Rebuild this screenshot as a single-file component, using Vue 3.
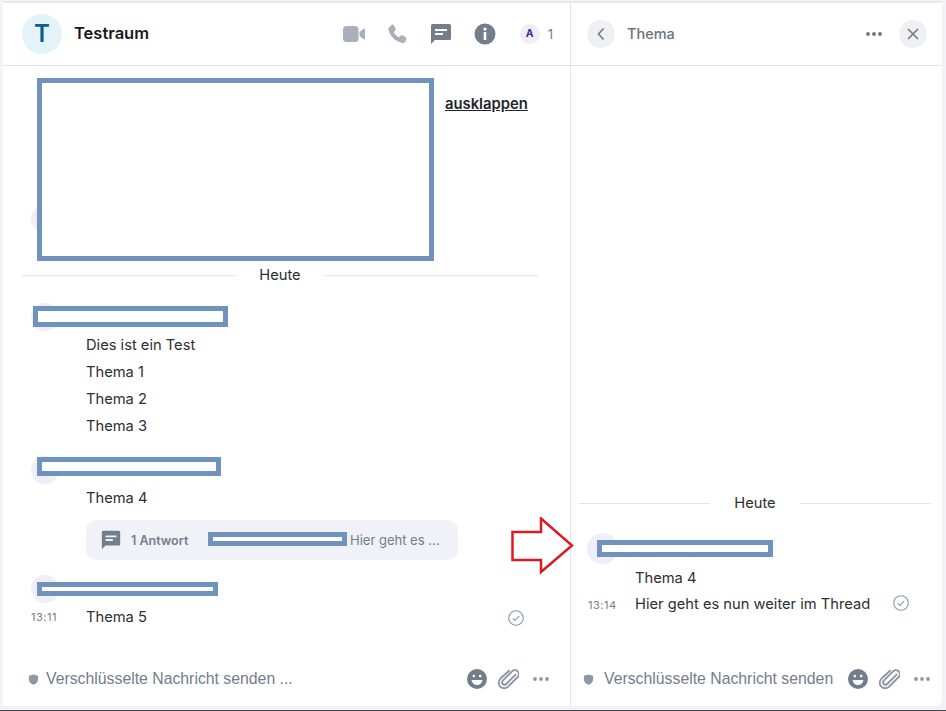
<script setup>
const topics = ['Dies ist ein Test', 'Thema 1', 'Thema 2', 'Thema 3']
</script>

<template>
  <div class="screen">
    <div class="app">
      <section class="main">
        <header class="bar">
          <div class="room-avatar">T</div>
          <h1 class="room-name">Testraum</h1>
          <div class="bar-icons">
            <svg class="ic video" viewBox="0 0 22 18"><rect x="0" y="1" width="15.500" height="16" rx="3.500"/><path d="M16.500 7 21 3.400c.4-.3 1-.1 1 .5v10.200c0 .6-.6.8-1 .5L16.500 11z"/></svg>
            <svg class="ic phone" viewBox="0 0 24 24"><path d="M6.600 2.800c.9-.5 1.900-.2 2.400.7l1.500 3c.4.800.2 1.700-.4 2.300L8.800 10c.9 2.300 2.800 4.300 5.200 5.200l1.300-1.300c.6-.6 1.500-.7 2.200-.3l3 1.500c.9.500 1.200 1.600.7 2.400l-.9 1.900c-.5 1.100-1.800 1.800-3 1.500C9.800 19 5 14.200 3.500 7.700c-.3-1.200.4-2.400 1.400-3z"/></svg>
            <svg class="ic chat" viewBox="0 0 24 24"><path fill-rule="evenodd" d="M3.500 2h17A1.500 1.500 0 0 1 22 3.500v13a1.500 1.500 0 0 1-1.500 1.500H6l-4 4V3.500A1.500 1.500 0 0 1 3.500 2zM6 7v2h12V7zm0 4v2h8v-2z"/></svg>
            <svg class="ic info" viewBox="0 0 24 24"><path fill-rule="evenodd" d="M12 1.500a10.500 10.500 0 1 1 0 21 10.500 10.500 0 0 1 0-21zM10.700 10v8h2.600v-8zM12 5.500a1.600 1.600 0 1 0 0 3.200 1.600 1.600 0 0 0 0-3.200z"/></svg>
            <div class="members"><span class="member-a">A</span><span class="member-n">1</span></div>
          </div>
        </header>

        <div class="timeline">
          <div class="preview">
            <span class="avatar preview-avatar"></span>
            <div class="mask preview-mask"></div>
            <a class="expand">ausklappen</a>
          </div>

          <div class="day main-day"><span class="day-line"></span><span class="day-text">Heute</span><span class="day-line"></span></div>

          <div class="head head-first"><span class="avatar"></span><div class="mask m1"></div></div>
          <p v-for="t in topics" :key="t" class="line">{{ t }}</p>

          <div class="head head-second"><span class="avatar"></span><div class="mask m2"></div></div>
          <p class="line">Thema 4</p>
          <div class="thread-pill">
            <svg class="pill-icon" viewBox="0 0 24 24"><path fill-rule="evenodd" d="M3.500 2h17A1.500 1.500 0 0 1 22 3.500v13a1.500 1.500 0 0 1-1.500 1.500H6l-4 4V3.500A1.500 1.500 0 0 1 3.500 2zM6 7v2h12V7zm0 4v2h8v-2z"/></svg>
            <span class="pill-count">1 Antwort</span>
            <span class="pill-text">Hier geht es ...</span>
            <div class="mask m3"></div>
          </div>

          <div class="head head-third"><span class="avatar"></span><div class="mask m4"></div></div>
          <div class="line timed">
            <span class="time">13:11</span>
            <span class="timed-text">Thema 5</span>
            <svg class="check check-main" viewBox="0 0 16 16"><circle cx="8" cy="8" r="7.300"/><path d="M4.800 8.300 7 10.500l4.200-4.600"/></svg>
          </div>
        </div>

        <footer class="composer">
          <svg class="shield" viewBox="0 0 12 12"><path d="M6 .5 11 2v4c0 3-2.200 4.800-5 5.700C3.200 10.800 1 9 1 6V2z"/></svg>
          <span class="placeholder">Verschlüsselte Nachricht senden ...</span>
          <div class="composer-icons">
            <svg class="c-ic" viewBox="0 0 22 22"><path fill-rule="evenodd" d="M11 1a10 10 0 1 1 0 20 10 10 0 0 1 0-20zM7.800 6.800a1.300 1.300 0 1 0 0 2.600 1.300 1.300 0 0 0 0-2.600zm6.400 0a1.300 1.300 0 1 0 0 2.600 1.300 1.300 0 0 0 0-2.600zM5.500 12c.5 3 2.800 5 5.500 5s5-2 5.500-5z"/></svg>
            <svg class="c-ic clip" viewBox="0 0 22 22"><path d="M18.600 6.600 9.200 16a2.400 2.400 0 0 1-3.400-3.400l9.200-9.300a4 4 0 1 1 5.700 5.700l-9.600 9.600a5.500 5.500 0 0 1-7.800-7.800L12 2.700"/></svg>
            <svg class="dots" viewBox="0 0 16 4"><circle cx="2" cy="2" r="1.900"/><circle cx="8" cy="2" r="1.900"/><circle cx="14" cy="2" r="1.900"/></svg>
          </div>
        </footer>
      </section>

      <aside class="thread">
        <header class="bar thread-bar">
          <button class="round"><svg class="chev" viewBox="0 0 10 14"><path d="M7.500 1.500 2.500 7l5 5.500"/></svg></button>
          <h2 class="thread-title">Thema</h2>
          <svg class="dots dots-top" viewBox="0 0 16 4"><circle cx="2" cy="2" r="1.900"/><circle cx="8" cy="2" r="1.900"/><circle cx="14" cy="2" r="1.900"/></svg>
          <button class="round"><svg class="cross" viewBox="0 0 12 12"><path d="M1 1l10 10M11 1 1 11"/></svg></button>
        </header>

        <div class="thread-body">
          <div class="day thread-day"><span class="day-line"></span><span class="day-text">Heute</span><span class="day-line"></span></div>
          <div class="head thread-head"><span class="avatar big"></span><div class="mask m5"></div></div>
          <p class="line thread-line">Thema 4</p>
          <div class="line timed thread-timed">
            <span class="time">13:14</span>
            <span class="timed-text">Hier geht es nun weiter im Thread</span>
            <svg class="check check-thread" viewBox="0 0 16 16"><circle cx="8" cy="8" r="7.300"/><path d="M4.800 8.300 7 10.500l4.200-4.600"/></svg>
          </div>
        </div>

        <footer class="composer thread-composer">
          <svg class="shield" viewBox="0 0 12 12"><path d="M6 .5 11 2v4c0 3-2.200 4.800-5 5.700C3.200 10.800 1 9 1 6V2z"/></svg>
          <span class="placeholder">Verschlüsselte Nachricht senden</span>
          <div class="composer-icons">
            <svg class="c-ic" viewBox="0 0 22 22"><path fill-rule="evenodd" d="M11 1a10 10 0 1 1 0 20 10 10 0 0 1 0-20zM7.800 6.800a1.300 1.300 0 1 0 0 2.600 1.300 1.300 0 0 0 0-2.600zm6.400 0a1.300 1.300 0 1 0 0 2.600 1.300 1.300 0 0 0 0-2.600zM5.500 12c.5 3 2.800 5 5.500 5s5-2 5.500-5z"/></svg>
            <svg class="c-ic clip" viewBox="0 0 22 22"><path d="M18.600 6.600 9.200 16a2.400 2.400 0 0 1-3.400-3.400l9.200-9.300a4 4 0 1 1 5.700 5.700l-9.600 9.600a5.500 5.500 0 0 1-7.800-7.800L12 2.700"/></svg>
            <svg class="dots" viewBox="0 0 16 4"><circle cx="2" cy="2" r="1.900"/><circle cx="8" cy="2" r="1.900"/><circle cx="14" cy="2" r="1.900"/></svg>
          </div>
        </footer>
      </aside>
    </div>

    <svg class="arrow" viewBox="0 0 64 58"><path d="M1.500 15H30V1.500L61 28.500 30 55V43H1.500z"/></svg>
  </div>
</template>

<style>
html, body { margin: 0; background: #f4f4f6; overflow: hidden; }
</style>

<style scoped>
.screen {
  position: relative;
  width: 946px;
  height: 711px;
  box-sizing: border-box;
  padding: 1px 4px 0 3px;
  background: #f3f3f5;
  border-bottom: 1px solid #45484d;
  font-family: Inter, "Liberation Sans", sans-serif;
  color: #2e2f32;
}
.app {
  display: flex;
  height: 705px;
  box-sizing: border-box;
  background: #fff;
  border-top: 2px solid #e9e9eb;
  border-bottom-right-radius: 8px;
  overflow: hidden;
}
.main {
  width: 567px;
  display: flex;
  flex-direction: column;
  border-right: 1px solid #e3e4e8;
  flex: none;
}
.thread {
  flex: 1;
  min-width: 0;
  display: flex;
  flex-direction: column;
}
.bar {
  flex: none;
  height: 62px;
  display: flex;
  align-items: center;
  border-bottom: 1px solid #e3e4e8;
  padding-left: 19px;
  padding-right: 17px;
}
.room-avatar {
  width: 40px;
  height: 40px;
  border-radius: 50%;
  background: #e2f3f9;
  color: #0d5f8c;
  font-size: 24px;
  font-weight: 600;
  line-height: 40px;
  text-align: center;
}
.room-name {
  margin: 0 0 2px 12px;
  font-size: 16.500px;
  font-weight: 600;
  color: #17191c;
}
.bar-icons {
  margin-left: auto;
  display: flex;
  align-items: center;
}
.ic { fill: #8d97a5; display: block; }
.video { width: 22px; height: 18px; fill: #a9b0ba; }
.phone { width: 24px; height: 24px; margin-left: 20px; fill: #a9b0ba; }
.chat { width: 24px; height: 24px; margin-left: 20px; fill: #737d8c; }
.info { width: 24px; height: 24px; margin-left: 20px; fill: #737d8c; }
.members {
  margin-left: 23px;
  display: flex;
  align-items: center;
  gap: 8px;
}
.member-a {
  width: 20px;
  height: 20px;
  border-radius: 50%;
  background: #f0ecfa;
  color: #4b2a96;
  font-size: 10.500px;
  font-weight: 700;
  line-height: 20px;
  text-align: center;
}
.member-n { font-size: 13px; color: #737d8c; }

.timeline {
  flex: 1;
  min-height: 0;
  position: relative;
}
.preview {
  position: relative;
  height: 183px;
  margin-top: 12px;
}
.mask {
  position: absolute;
  box-sizing: border-box;
  border: 5px solid #7093bd;
  background: #fff;
}
.avatar {
  display: block;
  width: 28px;
  height: 28px;
  border-radius: 50%;
  background: #efeefa;
  margin-left: 28px;
}
.avatar.big { width: 31px; height: 31px; margin-left: 16px; }
.preview-avatar { position: absolute; top: 127px; left: 0; }
.preview-mask { left: 34px; top: 0; width: 397px; height: 183px; }
.expand {
  position: absolute;
  left: 442px;
  top: 16px;
  font-size: 14.800px;
  font-weight: 600;
  line-height: 20px;
  color: #22252a;
  text-decoration: underline;
}
.day {
  display: flex;
  align-items: center;
  height: 20px;
  font-size: 14.700px;
  color: #2e2f32;
}
.main-day { margin: 4px 32px 0 19px; }
.thread-day { margin: 0 11px 0 8px; }
.day-line { flex: 1; height: 1px; background: #e3e4e8; }
.day-text { width: 90px; text-align: center; }

.head { position: relative; height: 28px; margin-bottom: 1px; }
.head-first { margin-top: 18px; }
.head-second { margin-top: 16px; }
.head-third { margin-top: 15px; }
.thread-head { height: 31px; margin-top: 20px; margin-bottom: 1px; }
.m1 { left: 30px; top: 3px; width: 195px; height: 21px; }
.m2 { left: 34px; top: 1px; width: 184px; height: 19px; }
.m4 { left: 34px; top: 7px; width: 181px; height: 14px; }
.m5 { left: 26px; top: 7px; width: 176px; height: 17px; }

.line {
  margin: 0 0 0 83px;
  height: 27px;
  font-size: 14.700px;
  line-height: 27px;
  color: #2e2f32;
}
.thread-line { margin-left: 64px; height: 26px; line-height: 26px; }
.timed { position: relative; margin-left: 0; display: flex; }
.time {
  width: 83px;
  box-sizing: border-box;
  padding-left: 28px;
  font-size: 11px;
  letter-spacing: 0.500px;
  color: #737d8c;
}
.timed-text { white-space: nowrap; }
.thread-timed { height: 26px; line-height: 26px; }
.thread-timed .time { width: 64px; padding-left: 17px; margin-top: 1px; }
.check {
  position: absolute;
  width: 16px;
  height: 16px;
  fill: none;
  stroke: #8d97a5;
  stroke-width: 1.100;
}
.check-main { left: 505px; top: 6px; }
.check-thread { left: 322px; top: 4px; }

.thread-pill {
  position: relative;
  margin: 8px 0 0 83px;
  width: 372px;
  height: 40px;
  box-sizing: border-box;
  padding-left: 14px;
  border-radius: 10px;
  background: #f0f2f7;
  display: flex;
  align-items: center;
}
.pill-icon { width: 22px; height: 22px; fill: #737d8c; flex: none; }
.pill-count { margin-left: 9px; font-size: 12.500px; font-weight: 600; color: #737d8c; width: 219px; flex: none; }
.pill-text { color: #737d8c; font-size: 13px; white-space: nowrap; }
.m3 { left: 122px; top: 12px; width: 139px; height: 14px; }

.thread-body {
  flex: 1;
  min-height: 0;
  display: flex;
  flex-direction: column;
  justify-content: flex-end;
  padding-bottom: 35px;
}

.composer {
  flex: none;
  height: 54px;
  display: flex;
  align-items: center;
  padding-left: 25px;
}
.thread-composer { padding-left: 12px; }
.shield { width: 11px; height: 11px; fill: #8d97a5; flex: none; }
.placeholder {
  margin-left: 7px;
  font-family: "Liberation Sans", Arial, sans-serif;
  font-size: 15.800px;
  color: #737d8c;
  white-space: nowrap;
}
.thread-composer .placeholder { margin-left: 10px; }
.composer-icons {
  margin-left: auto;
  display: flex;
  align-items: center;
  padding-right: 21px;
}
.thread-composer .composer-icons { padding-right: 12px; }
.c-ic { width: 22px; height: 22px; fill: #737d8c; display: block; }
.clip {
  margin-left: 9px;
  fill: none;
  stroke: #8d97a5;
  stroke-width: 1.900;
  stroke-linecap: round;
}
.dots { width: 16px; height: 4px; margin-left: 14px; fill: #8d97a5; display: block; }

.thread-bar { padding-left: 16px; padding-right: 15px; }
.round {
  width: 28px;
  height: 28px;
  padding: 0;
  border: 0;
  border-radius: 50%;
  background: #eef0f3;
  display: flex;
  align-items: center;
  justify-content: center;
}
.chev { width: 10px; height: 14px; fill: none; stroke: #737d8c; stroke-width: 1.700; }
.cross { width: 12px; height: 12px; fill: none; stroke: #737d8c; stroke-width: 1.700; }
.thread-title {
  margin: 0 0 2px 12px;
  font-size: 14.500px;
  font-weight: 500;
  color: #6b737e;
}
.dots-top { margin-left: auto; margin-right: 17px; fill: #6b737e; }

.arrow {
  position: absolute;
  left: 511px;
  top: 517px;
  width: 64px;
  height: 58px;
  fill: #fff;
  stroke: #dc1a24;
  stroke-width: 2.500;
}
</style>
